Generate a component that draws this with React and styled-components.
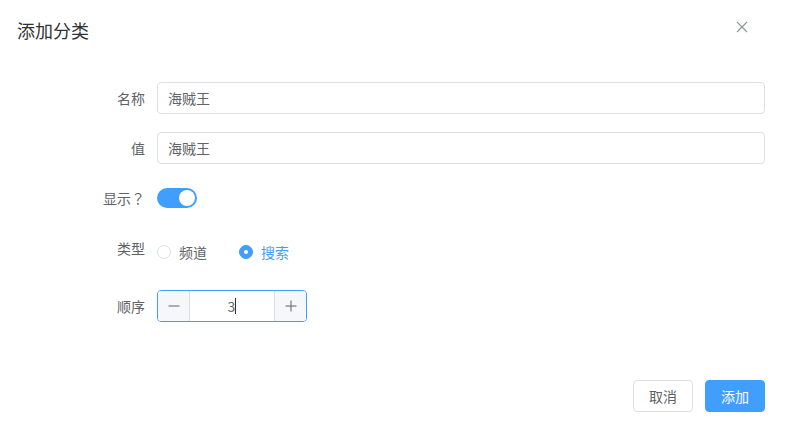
import styled, { createGlobalStyle } from "styled-components";

const GlobalStyle = createGlobalStyle`
    html, body {
        margin: 0;
        padding: 0;
        background: #fff;
    }
    body {
        font-family: "Noto Sans CJK SC", "Liberation Sans", sans-serif;
        font-size: 14px;
        color: #606266;
    }
`;

// ------ INSIDE COMPONENTS ------ //

const CloseIcon = () => (
    <svg width="12" height="12" viewBox="0 0 12 12">
        <path d="M1 1 L11 11 M11 1 L1 11" stroke="#909399" strokeWidth="1.1" fill="none" />
    </svg>
);

const FormItem = ({ label, tall, children }) => (
    <StyledFormItem>
        <StyledLabel>{label}</StyledLabel>
        <StyledContent $tall={tall}>{children}</StyledContent>
    </StyledFormItem>
);

const Radio = ({ checked, children }) => (
    <StyledRadio $checked={checked}>
        <RadioDot $checked={checked} />
        <span>{children}</span>
    </StyledRadio>
);

const NumberInput = ({ value }) => (
    <StyledNumber>
        <NumberButton $side="left">
            <svg width="12" height="12" viewBox="0 0 12 12">
                <path d="M0.5 6 H11.5" stroke="#606266" strokeWidth="1" />
            </svg>
        </NumberButton>
        <NumberValue>
            {value}
            <Caret />
        </NumberValue>
        <NumberButton $side="right">
            <svg width="12" height="12" viewBox="0 0 12 12">
                <path d="M0.5 6 H11.5 M6 0.5 V11.5" stroke="#606266" strokeWidth="1" />
            </svg>
        </NumberButton>
    </StyledNumber>
);

// ------ COMPONENT ------ //

const App = () => {
    return (
        <>
            <GlobalStyle />
            <Dialog>
                <Header>
                    <Title>添加分类</Title>
                    <CloseButton>
                        <CloseIcon />
                    </CloseButton>
                </Header>

                <Body>
                    <FormItem label="名称">
                        <Input defaultValue="海贼王" />
                    </FormItem>
                    <FormItem label="值">
                        <Input defaultValue="海贼王" />
                    </FormItem>
                    <FormItem label={<>显示<Punct>？</Punct></>}>
                        <Switch $on>
                            <Knob />
                        </Switch>
                    </FormItem>
                    <FormItem label="类型" tall>
                        <Radio>频道</Radio>
                        <Radio checked>搜索</Radio>
                    </FormItem>
                    <FormItem label="顺序">
                        <NumberInput value="3" />
                    </FormItem>
                </Body>

                <Footer>
                    <Button>取消</Button>
                    <Button $primary>添加</Button>
                </Footer>
            </Dialog>
        </>
    );
};

export default App;

// ------ STYLED COMPONENTS ------ //

const Dialog = styled.div`
    width: 785px;
    height: 432px;
    background: #fff;
    box-sizing: border-box;
    display: flex;
    flex-direction: column;
`;

const Header = styled.div`
    padding: 18px 20px 10px 17px;
    height: 24px;
    display: flex;
    align-items: center;
    justify-content: space-between;
`;

const Title = styled.span`
    font-size: 18px;
    line-height: 24px;
    color: #303133;
`;

const CloseButton = styled.div`
    width: 16px;
    height: 16px;
    margin-right: 15px;
    margin-top: -6px;
    display: flex;
    align-items: center;
    justify-content: center;
`;

const Body = styled.div`
    padding: 30px 20px;
    flex: 1;
`;

const StyledFormItem = styled.div`
    display: flex;
    align-items: flex-start;
    margin-bottom: 18px;
`;

const StyledLabel = styled.label`
    width: 137px;
    box-sizing: border-box;
    padding-right: 12px;
    text-align: right;
    line-height: 32px;
    height: 32px;
    font-size: 14px;
    color: #606266;
    flex-shrink: 0;
`;

const Punct = styled.span`
    font-family: "Noto Sans CJK TC", "Noto Sans CJK SC", sans-serif;
`;

const StyledContent = styled.div`
    flex: 1;
    display: flex;
    align-items: center;
    min-height: ${(p) => (p.$tall ? "40px" : "32px")};
`;

const Input = styled.input`
    width: 100%;
    height: 32px;
    box-sizing: border-box;
    border: 1px solid #dcdfe6;
    border-radius: 4px;
    padding: 0 10px;
    font-family: inherit;
    font-size: 14px;
    color: #606266;
    outline: none;
`;

const Switch = styled.div`
    width: 40px;
    height: 20px;
    border-radius: 10px;
    background: ${(p) => (p.$on ? "#409eff" : "#dcdfe6")};
    position: relative;
    box-sizing: border-box;
`;

const Knob = styled.span`
    position: absolute;
    top: 2px;
    right: 2px;
    width: 16px;
    height: 16px;
    border-radius: 50%;
    background: #fff;
`;

const StyledRadio = styled.label`
    display: flex;
    align-items: center;
    margin-right: 32px;
    font-size: 14px;
    line-height: 20px;
    color: ${(p) => (p.$checked ? "#409eff" : "#606266")};

    span {
        padding-left: 8px;
    }
`;

const RadioDot = styled.i`
    width: 14px;
    height: 14px;
    box-sizing: border-box;
    border-radius: 50%;
    border: 1px solid ${(p) => (p.$checked ? "#409eff" : "#dcdfe6")};
    background: ${(p) => (p.$checked ? "#409eff" : "#fff")};
    position: relative;

    &::after {
        content: "";
        display: ${(p) => (p.$checked ? "block" : "none")};
        position: absolute;
        width: 4px;
        height: 4px;
        border-radius: 50%;
        background: #fff;
        top: 50%;
        left: 50%;
        transform: translate(-50%, -50%);
    }
`;

const StyledNumber = styled.div`
    width: 150px;
    height: 32px;
    box-sizing: border-box;
    border: 1px solid #409eff;
    border-radius: 4px;
    display: flex;
    overflow: hidden;
`;

const NumberButton = styled.div`
    width: 31px;
    background: #f5f7fa;
    display: flex;
    align-items: center;
    justify-content: center;
    ${(p) => (p.$side === "left" ? "border-right: 1px solid #dcdfe6;" : "border-left: 1px solid #dcdfe6;")}
`;

const NumberValue = styled.div`
    flex: 1;
    display: flex;
    align-items: center;
    justify-content: center;
    font-size: 14px;
    color: #606266;
`;

const Caret = styled.span`
    display: inline-block;
    width: 1px;
    height: 16px;
    background: #303133;
`;

const Footer = styled.div`
    padding: 10px 20px 20px;
    display: flex;
    justify-content: flex-end;
    gap: 12px;
`;

const Button = styled.button`
    width: 60px;
    height: 32px;
    box-sizing: border-box;
    border-radius: 4px;
    font-family: inherit;
    font-size: 14px;
    border: 1px solid ${(p) => (p.$primary ? "#409eff" : "#dcdfe6")};
    background: ${(p) => (p.$primary ? "#409eff" : "#fff")};
    color: ${(p) => (p.$primary ? "#fff" : "#606266")};
    padding: 0;
`;
